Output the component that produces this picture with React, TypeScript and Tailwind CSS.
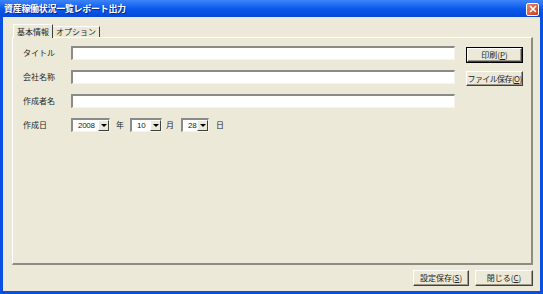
import React from 'react';

const FIELD =
  'h-[14px] bg-white border-t-2 border-l-2 border-b border-r border-t-[#8a8a86] border-l-[#8a8a86] border-b-[#f4f3ee] border-r-[#f4f3ee]';

const BTN =
  'flex items-center justify-center bg-[#ece9d8] border border-t-white border-l-white border-b-[#404040] border-r-[#404040] shadow-[inset_-1px_-1px_0_#9d9a8c] text-[8px] leading-none text-[#222]';

function Combo({ value, width }: { value: string; width: string }) {
  return (
    <div className={`${FIELD} ${width} flex items-center`}>
      <span className="flex-1 pl-[5px] font-['Liberation_Sans',sans-serif] text-[8px] leading-none tracking-[-0.3px] text-[#222]">
        {value}
      </span>
      <div className="h-full w-[11px] bg-[#ece9d8] border border-t-white border-l-white border-b-[#404040] border-r-[#404040] flex items-center justify-center">
        <div className="w-0 h-0 border-l-[3px] border-r-[3px] border-t-[3px] border-l-transparent border-r-transparent border-t-black" />
      </div>
    </div>
  );
}

function Field({ label }: { label: string }) {
  return (
    <div className="flex items-center">
      <span className="w-[48px] text-[8px] leading-none">{label}</span>
      <div className={`${FIELD} w-[384px]`} />
    </div>
  );
}

export default function App() {
  return (
    <div className="w-[543px] h-[294px] bg-[#0a50e0] flex flex-col pb-[3px] font-['Noto_Sans_CJK_JP',sans-serif] text-[#262626] select-none">
      {/* title bar */}
      <div className="h-[17px] flex items-center pl-[4px] pr-[4px] bg-gradient-to-b from-[#3d83f8] via-[#0a5aec] to-[#0448d8]">
        <span className="flex-1 text-[9px] font-bold text-white leading-none tracking-[-0.3px] [text-shadow:1px_1px_0_#0a2a8a]">
          資産稼働状況一覧レポート出力
        </span>
        <div className="w-[13px] h-[13px] mt-[1px] rounded-[2px] border border-white bg-gradient-to-br from-[#e8856a] to-[#c83c14] flex items-center justify-center">
          <svg width="8" height="8" viewBox="0 0 8 8">
            <path d="M1 1 L7 7 M7 1 L1 7" stroke="white" strokeWidth="1.6" />
          </svg>
        </div>
      </div>

      {/* body */}
      <div className="flex-1 mx-[3px] bg-[#ece9d8] flex flex-col pt-[6px] pl-[9px] pr-[7px]">
        {/* tabs */}
        <div className="flex items-end h-[14px] pl-[1px]">
          <div className="h-[14px] px-[3px] flex items-center bg-[#ece9d8] border-t border-l border-r border-t-white border-l-white border-r-[#404040] text-[8px] leading-none relative top-[1px] z-10">
            基本情報
          </div>
          <div className="h-[11px] px-[3px] flex items-center border-t border-r border-t-white border-r-[#404040] text-[8px] leading-none">
            オプション
          </div>
        </div>

        {/* panel */}
        <div className="h-[228px] w-[521px] border-t border-l border-t-white border-l-white border-r-2 border-b-2 border-r-[#8e8c82] border-b-[#8e8c82] flex pt-[8px] pl-[10px]">
          <div className="flex flex-col gap-[10px]">
            <Field label="タイトル" />
            <Field label="会社名称" />
            <Field label="作成者名" />
            <div className="flex items-center">
              <span className="w-[48px] text-[8px] leading-none">作成日</span>
              <Combo value="2008" width="w-[39px]" />
              <span className="text-[8px] leading-none ml-[6px] mr-[6px]">年</span>
              <Combo value="10" width="w-[32px]" />
              <span className="text-[8px] leading-none ml-[4px] mr-[7px]">月</span>
              <Combo value="28" width="w-[28px]" />
              <span className="text-[8px] leading-none ml-[7px]">日</span>
            </div>
          </div>
          <div className="flex flex-col gap-[8px] ml-[11px] pt-[1px]">
            <div className="w-[57px] h-[16px] border border-black">
              <div className={`${BTN} w-full h-full`}>
                印刷(<span className="underline">P</span>)
              </div>
            </div>
            <div className={`${BTN} w-[57px] h-[15px] tracking-[-0.6px]`}>
              ファイル保存(<span className="underline">O</span>)
            </div>
          </div>
        </div>

        {/* bottom buttons */}
        <div className="flex justify-end gap-[6px] mt-[5px]">
          <div className={`${BTN} w-[56px] h-[16px]`}>
            設定保存(<span className="underline">S</span>)
          </div>
          <div className={`${BTN} w-[58px] h-[16px]`}>
            閉じる(<span className="underline">C</span>)
          </div>
        </div>
      </div>
    </div>
  );
}
